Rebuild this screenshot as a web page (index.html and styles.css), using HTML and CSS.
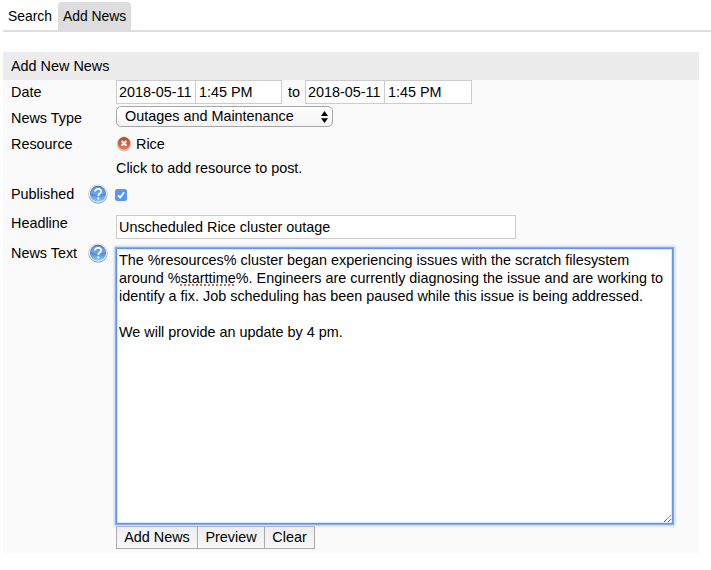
FILE: index.html
```html
<!DOCTYPE html>
<html lang="en">
<head>
<meta charset="utf-8">
<title>Add News</title>
<link rel="stylesheet" href="styles.css">
</head>
<body>
<svg class="defs" width="0" height="0" aria-hidden="true">
  <defs>
    <linearGradient id="blue" x1="0" y1="0" x2="0" y2="1"><stop offset="0" stop-color="#2d68bd"/><stop offset=".5" stop-color="#4489d8"/><stop offset="1" stop-color="#8bd0ff"/></linearGradient>
    <linearGradient id="rim" x1="0" y1="0" x2="0" y2="1"><stop offset="0" stop-color="#ddd"/><stop offset="1" stop-color="#999"/></linearGradient>
    <linearGradient id="red" x1="0" y1="0" x2="0" y2="1"><stop offset="0" stop-color="#b9482c"/><stop offset="1" stop-color="#e6794e"/></linearGradient>
    <symbol id="help" viewBox="0 0 20 20">
      <circle cx="10" cy="10" r="9.7" fill="url(#rim)"/>
      <circle cx="10" cy="9.8" r="8.9" fill="#f4f4f4"/>
      <circle cx="10" cy="9.8" r="8" fill="url(#blue)"/>
      <path d="M2.8 9.2a7.2 6.7 0 0 1 14.4 0q-7.2 2.6-14.4 0z" fill="#fff" opacity=".25"/>
      <path d="M7 7.6c0-3.8 6.2-3.6 6.2-.4 0 2.2-2.9 2.2-2.9 4.7" fill="none" stroke="#fff" stroke-width="1.8"/>
      <circle cx="10.3" cy="14.4" r="1.1" fill="#fff"/>
    </symbol>
  </defs>
</svg>
<nav class="tabs">
  <a class="tab">Search</a>
  <a class="tab active">Add News</a>
</nav>
<form class="panel">
  <h1 class="title">Add New News</h1>
  <div class="row date-row">
    <div class="label">Date</div>
    <div class="field dates">
      <input class="box date" value="2018-05-11"><input class="box time" value="1:45 PM">
      <span class="to">to</span>
      <input class="box date" value="2018-05-11"><input class="box time end" value="1:45 PM">
    </div>
  </div>
  <div class="row type-row">
    <div class="label">News Type</div>
    <div class="select">Outages and Maintenance
      <svg width="7" height="12" viewBox="0 0 7 12"><path d="M0 5L3.5 0 7 5zM0 7.2h7L3.5 12z"/></svg>
    </div>
  </div>
  <div class="row resource-row">
    <div class="label">Resource</div>
    <div class="resources">
      <div class="resource">
        <svg width="16" height="16" viewBox="0 0 16 16"><circle cx="8" cy="7.9" r="7.4" fill="#c6c6c6"/><circle cx="8" cy="7.2" r="6.9" fill="#e6e6e6"/><circle cx="8" cy="7.4" r="6.3" fill="url(#red)"/><path d="M5.6 5l4.8 4.8M10.4 5L5.6 9.8" stroke="#fff" stroke-width="2"/></svg>
        <span>Rice</span>
      </div>
      <div>Click to add resource to post.</div>
    </div>
  </div>
  <div class="row published-row">
    <div class="label">Published<svg class="help"><use href="#help"/></svg></div>
    <div class="check"><svg width="12" height="12" viewBox="0 0 12 12"><path d="M3 6.4L5.1 8.6 9.2 3.2" fill="none" stroke="#fff" stroke-width="1.8"/></svg></div>
  </div>
  <div class="row headline-row">
    <div class="label">Headline</div>
    <input class="box headline" value="Unscheduled Rice cluster outage">
  </div>
  <div class="row text-row">
    <div class="label">News Text<svg class="help"><use href="#help"/></svg></div>
    <div class="editor"><p>The %resources% cluster began experiencing issues with the scratch filesystem<br>around %<span class="misspelled">starttime</span>%. Engineers are currently diagnosing the issue and are working to<br>identify a fix. Job scheduling has been paused while this issue is being addressed.</p><p>We will provide an update by 4 pm.</p>
      <svg class="grip" width="9" height="9" viewBox="0 0 9 9"><path d="M1 8L8 1M5 8l3-3" stroke="#444" stroke-width="1" stroke-dasharray="1.2 .4"/></svg>
    </div>
  </div>
  <div class="buttons">
    <button type="button">Add News</button><button type="button">Preview</button><button type="button">Clear</button>
  </div>
</form>
</body>
</html>
```
FILE: styles.css
```css
* { box-sizing: border-box; }
body {
  margin: 0;
  padding: 2px 0 0 3px;
  background: #fff;
  color: #000;
  font: 14.4px/18px "Liberation Sans", Arial, sans-serif;
  overflow: hidden;
}
.defs { position: absolute; }
.tabs {
  display: flex;
  height: 30px;
  border-bottom: 2px solid #ddd;
  font-size: 13.9px;
}
.tab { padding: 5px 5px 0; white-space: nowrap; }
.tab:first-child { width: 55px; }
.tab.active { width: 73px; background: #ddd; border-radius: 4px 4px 0 0; }
.panel {
  width: 696px;
  height: 501px;
  margin-top: 20px;
  background: #fafafa;
}
.title {
  height: 28px;
  margin: 0;
  padding: 5px 8px;
  background: #ececec;
  font: inherit;
}
.row {
  display: grid;
  grid-template-columns: 105px 1fr;
  align-items: start;
  padding-left: 8px;
}
.label { display: flex; justify-content: space-between; padding: 3px 8px 0 0; white-space: nowrap; }
.date-row { height: 26px; }
.type-row { height: 26px; }
.resource-row { height: 50px; }
.published-row { height: 33px; }
.headline-row { height: 33px; }
.text-row { height: 278px; }
.dates { display: flex; }
.box {
  height: 24px;
  padding: 0 2px;
  border: 1px solid #ccc;
  border-radius: 0;
  background: #fff;
  color: #000;
  font: inherit;
  outline: 0;
}
.date { width: 80px; }
.time { width: 87px; margin-left: -1px; padding-left: 3px; }
.time.end { width: 88px; }
.to { width: 23px; padding: 3px 0 0 6px; }
.select {
  display: flex;
  justify-content: space-between;
  align-items: center;
  width: 217px;
  height: 21px;
  padding: 0 4px 1px 8px;
  border: 1px solid #a6a6a6;
  border-radius: 5px;
  background: linear-gradient(#fff, #f4f4f4);
  line-height: 17px;
}
.select svg { margin-top: 1px; }
.resources { line-height: 24px; }
.resource { display: flex; gap: 4px; align-items: center; }
.help { width: 20px; height: 20px; margin-top: -1px; }
.check {
  width: 12px;
  height: 12px;
  margin: 7px 0 0 -1px;
  border-radius: 2.5px;
  background: #5a92f5;
}
.check svg { display: block; }
.headline-row .label { margin-top: -1px; padding-top: 0; }
.headline { width: 400px; }
.text-row .label { padding-top: 0; margin-top: -4px; }
.editor {
  position: relative;
  width: 557px;
  height: 276px;
  padding: 2px;
  border: 1px solid #6795e4;
  background: #fff;
  box-shadow: 0 0 0 1px #86abed, 0 0 2px 2px #b9d0fb, inset 0 0 0 1px #d9e6fd;
  white-space: nowrap;
}
.editor p { margin: 0 0 18px; }
.misspelled { text-decoration: underline dotted #e2604f 2px; text-underline-offset: 1px; text-decoration-skip-ink: none; }
.grip { position: absolute; right: 0; bottom: 0; }
.buttons { display: flex; padding-left: 113px; }
button {
  height: 23px;
  padding: 0 0 2px;
  border: 1px solid #aaa;
  background: linear-gradient(#eee, #f7f7f7);
  color: #000;
  font: inherit;
  width: 82px;
}
button:nth-child(2) { width: 68px; margin-left: -1px; }
button:nth-child(3) { width: 51px; margin-left: -1px; }
```
